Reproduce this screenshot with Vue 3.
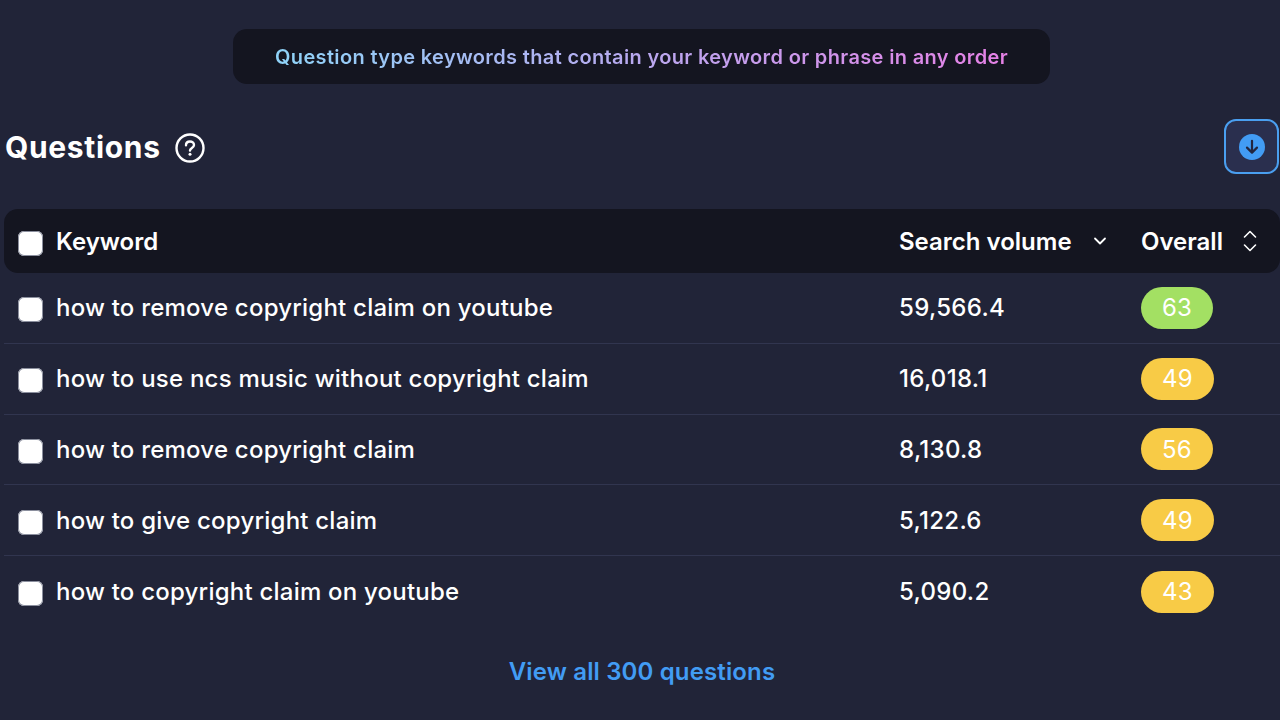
<script setup>
const rows = [
  { k: 'how to remove copyright claim on youtube', v: '59,566.4', o: 63, c: 'green' },
  { k: 'how to use ncs music without copyright claim', v: '16,018.1', o: 49, c: 'yellow' },
  { k: 'how to remove copyright claim', v: '8,130.8', o: 56, c: 'yellow' },
  { k: 'how to give copyright claim', v: '5,122.6', o: 49, c: 'yellow' },
  { k: 'how to copyright claim on youtube', v: '5,090.2', o: 43, c: 'yellow' },
]
</script>

<template>
  <div class="page">
    <div class="banner-wrap">
      <div class="banner"><span class="grad">Question type keywords that contain your keyword or phrase in any order</span></div>
    </div>

    <div class="title-row">
      <div class="title">
        <h2>Questions</h2>
        <svg class="help" width="30" height="30" viewBox="0 0 30 30" fill="none">
          <circle cx="15" cy="15" r="13.5" stroke="#fff" stroke-width="2.4" />
          <path d="M11 12.2c0-2.300 1.800-3.700 4-3.700s4 1.400 4 3.500c0 3-4 3-4 5.600" stroke="#fff" stroke-width="2.400" stroke-linecap="round" />
          <circle cx="15" cy="21.300" r="1.500" fill="#fff" />
        </svg>
      </div>
      <button class="download" aria-label="Download">
        <svg width="26" height="26" viewBox="0 0 26 26" fill="none">
          <circle cx="13" cy="13" r="13" fill="#429cf4" />
          <path d="M13 6.800v11.500M8 13.600l5 5 5-5" stroke="#22263f" stroke-width="2.200" stroke-linecap="round" stroke-linejoin="round" />
        </svg>
      </button>
    </div>

    <div class="table">
      <div class="row head">
        <span class="check"></span>
        <span class="kw">Keyword</span>
        <span class="vol">Search volume
          <svg class="chev" width="14" height="10" viewBox="0 0 14 10" fill="none"><path d="M2 2.500l5 5 5-5" stroke="#fff" stroke-width="1.800" stroke-linecap="round" stroke-linejoin="round" /></svg>
        </span>
        <span class="ov">Overall
          <svg class="sort" width="16" height="24" viewBox="0 0 16 24" fill="none"><path d="M2.500 8l5.500-5.500L13.500 8M2.500 16l5.500 5.500 5.500-5.500" stroke="#fff" stroke-width="1.600" stroke-linecap="round" stroke-linejoin="round" /></svg>
        </span>
      </div>
      <div v-for="r in rows" :key="r.k" class="row item">
        <span class="check"></span>
        <span class="kw">{{ r.k }}</span>
        <span class="vol num">{{ r.v }}</span>
        <span class="ov"><span class="pill" :class="r.c">{{ r.o }}</span></span>
      </div>
    </div>

    <div class="more">View all 300 questions</div>
  </div>
</template>

<style>
html, body { margin: 0; background: #212438; }
</style>

<style scoped>
.page {
  width: 1280px;
  height: 720px;
  box-sizing: border-box;
  padding-top: 29px;
  background: #212438;
  color: #fff;
  font-family: Inter, "Liberation Sans", sans-serif;
  overflow: hidden;
}
.banner-wrap { display: flex; justify-content: center; padding-left: 3px; }
.banner {
  width: 817px;
  height: 55px;
  box-sizing: border-box;
  display: flex;
  align-items: center;
  justify-content: center;
  background: #141520;
  border-radius: 14px;
}
.grad {
  font-size: 20px;
  font-weight: 600;
  letter-spacing: 0.35px;
  background: linear-gradient(90deg, #8fd3f8 0%, #b9a8ef 50%, #e681e6 100%);
  -webkit-background-clip: text;
  background-clip: text;
  color: transparent;
}
.title-row {
  display: flex;
  align-items: center;
  justify-content: space-between;
  margin-top: 35px;
  height: 55px;
  padding: 0 1px 0 5px;
}
.title { display: flex; align-items: center; gap: 14px; }
h2 { margin: 0; font-size: 30px; font-weight: 700; letter-spacing: 0.67px; line-height: 1; color: #fff; }
.help { margin-top: 2px; }
.download {
  width: 55px;
  height: 55px;
  padding: 0;
  display: flex;
  align-items: center;
  justify-content: center;
  background: #2a2f4e;
  border: 2px solid #4a9ff0;
  border-radius: 12px;
  box-sizing: border-box;
}
.table { margin: 35px 0 0 4px; }
.row {
  display: grid;
  grid-template-columns: 38px 843px 242px 1fr;
  align-items: center;
  padding-left: 14px;
  font-size: 24px;
  font-weight: 500;
  letter-spacing: 0.22px;
  box-sizing: border-box;
}
.head {
  height: 64px;
  background: #141520;
  border-radius: 14px;
  font-weight: 600;
  letter-spacing: 0;
}
.item { height: 70.8px; border-bottom: 1px solid #31354f; }
.item:last-child { border-bottom: 0; }
.check {
  width: 25px;
  height: 25px;
  margin-top: 4px;
  background: #fff;
  border-radius: 6px;
  box-shadow: 0 0 0 1px #8b8f9e inset;
}
.vol, .ov { display: flex; align-items: center; }
.num { letter-spacing: 0.3px; }
.chev { margin-left: 21px; }
.sort { margin-left: 19px; }
.pill {
  display: inline-flex;
  align-items: center;
  justify-content: center;
  padding: 0 21px;
  height: 42px;
  border-radius: 21px;
  color: #fff;
  font-weight: 400;
}
.green { background: #a3e063; }
.yellow { background: #f8cb46; }
.more {
  margin-top: 30px;
  padding-left: 4px;
  text-align: center;
  font-size: 24px;
  font-weight: 600;
  letter-spacing: 0.14px;
  color: #429cf4;
}
</style>
